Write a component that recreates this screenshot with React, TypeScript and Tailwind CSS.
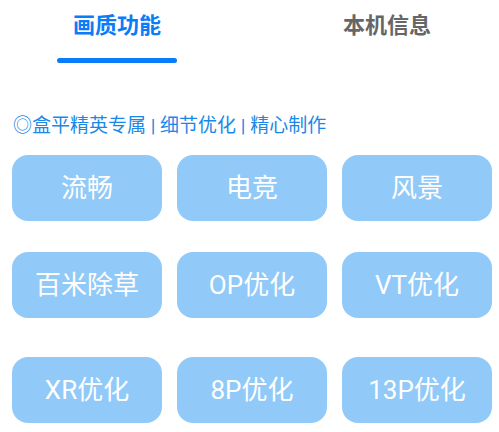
import React from 'react';

const rows = [
  { mt: 'mt-[18px]', items: ['流畅', '电竞', '风景'] },
  { mt: 'mt-[31px]', items: ['百米除草', 'OP优化', 'VT优化'] },
  { mt: 'mt-[39px]', items: ['XR优化', '8P优化', '13P优化'] },
];

export default function App() {
  return (
    <div
      className="w-[499px] h-[432px] bg-white overflow-hidden"
      style={{ fontFamily: 'Roboto, "Noto Sans CJK SC", sans-serif' }}
    >
      {/* Tabs */}
      <div className="flex pl-[57px] pt-[13px]">
        <div className="w-[120px] flex flex-col items-center">
          <span className="text-[22px] leading-[26px] font-bold text-[#0a7cf7]">画质功能</span>
          <div className="mt-[19px] w-[120px] h-[5px] rounded-full bg-[#0a7cf7]" />
        </div>
        <div className="ml-[150px] w-[120px] flex flex-col items-center">
          <span className="text-[22px] leading-[26px] font-bold text-[#666666]">本机信息</span>
        </div>
      </div>

      {/* Subtitle */}
      <div className="mt-[51px] pl-[13px] text-[19px] leading-[23px] text-[#1a88e8] whitespace-nowrap">
        ◎盒平精英专属 | 细节优化 | 精心制作
      </div>

      {/* Buttons */}
      <div className="px-[12px]">
        {rows.map((row, i) => (
          <div key={i} className={`${row.mt} flex gap-[15px]`}>
            {row.items.map((label) => (
              <button
                key={label}
                className="shrink-0 w-[150px] h-[66px] rounded-[16px] bg-[#91caf8] text-white text-[26px] flex items-center justify-center"
              >
                {label}
              </button>
            ))}
          </div>
        ))}
      </div>
    </div>
  );
}
